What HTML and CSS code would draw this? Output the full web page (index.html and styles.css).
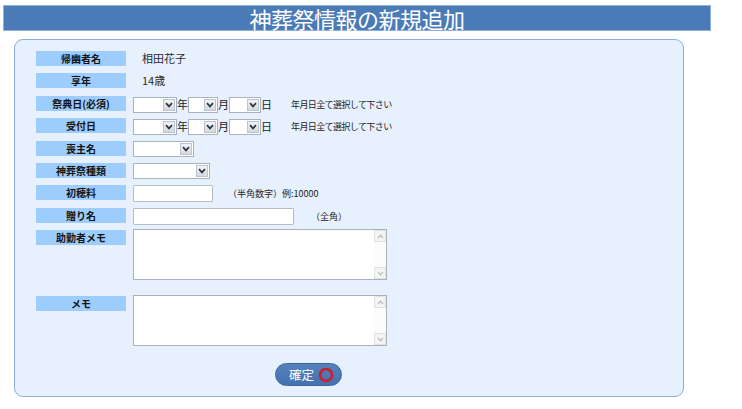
FILE: index.html
```html
<!DOCTYPE html>
<html lang="ja">
<head>
<meta charset="utf-8">
<title>神葬祭情報の新規追加</title>
<link rel="stylesheet" href="styles.css">
</head>
<body>
<h1 class="title">神葬祭情報の新規追加</h1>
<div class="panel">
  <div class="form">
    <div class="label">帰幽者名</div>
    <div class="value">相田花子</div>

    <div class="label">享年</div>
    <div class="value">14歳</div>

    <div class="label">祭典日(必須)</div>
    <div class="date">
      <span class="sel w-year"><span class="arr"><svg width="8" height="6" viewBox="0 0 8 6"><path d="M1 1.2 L4 4.4 L7 1.2" stroke="#2d3540" stroke-width="1.7" fill="none"/></svg></span></span><span class="unit">年</span>
      <span class="sel w-month"><span class="arr"><svg width="8" height="6" viewBox="0 0 8 6"><path d="M1 1.2 L4 4.4 L7 1.2" stroke="#2d3540" stroke-width="1.7" fill="none"/></svg></span></span><span class="unit">月</span>
      <span class="sel w-day"><span class="arr"><svg width="8" height="6" viewBox="0 0 8 6"><path d="M1 1.2 L4 4.4 L7 1.2" stroke="#2d3540" stroke-width="1.7" fill="none"/></svg></span></span><span class="unit">日</span>
      <span class="note date-note">年月日全て選択して下さい</span>
    </div>

    <div class="label">受付日</div>
    <div class="date">
      <span class="sel w-year"><span class="arr"><svg width="8" height="6" viewBox="0 0 8 6"><path d="M1 1.2 L4 4.4 L7 1.2" stroke="#2d3540" stroke-width="1.7" fill="none"/></svg></span></span><span class="unit">年</span>
      <span class="sel w-month"><span class="arr"><svg width="8" height="6" viewBox="0 0 8 6"><path d="M1 1.2 L4 4.4 L7 1.2" stroke="#2d3540" stroke-width="1.7" fill="none"/></svg></span></span><span class="unit">月</span>
      <span class="sel w-day"><span class="arr"><svg width="8" height="6" viewBox="0 0 8 6"><path d="M1 1.2 L4 4.4 L7 1.2" stroke="#2d3540" stroke-width="1.7" fill="none"/></svg></span></span><span class="unit">日</span>
      <span class="note date-note">年月日全て選択して下さい</span>
    </div>

    <div class="label">喪主名</div>
    <div class="field">
      <span class="sel w-mourner"><span class="arr"><svg width="8" height="6" viewBox="0 0 8 6"><path d="M1 1.2 L4 4.4 L7 1.2" stroke="#2d3540" stroke-width="1.7" fill="none"/></svg></span></span>
    </div>

    <div class="label">神葬祭種類</div>
    <div class="field">
      <span class="sel w-kind"><span class="arr"><svg width="8" height="6" viewBox="0 0 8 6"><path d="M1 1.2 L4 4.4 L7 1.2" stroke="#2d3540" stroke-width="1.7" fill="none"/></svg></span></span>
    </div>

    <div class="label">初穂料</div>
    <div class="field">
      <input class="txt w-fee" type="text">
      <span class="note fee-note">（半角数字）例:10000</span>
    </div>

    <div class="label">贈り名</div>
    <div class="field">
      <input class="txt w-name" type="text">
      <span class="note name-note">（全角）</span>
    </div>

    <div class="label">助勤者メモ</div>
    <div class="field">
      <div class="ta">
        <div class="sb">
          <span class="sbtn"><svg width="7" height="5" viewBox="0 0 7 5"><path d="M1 4 L3.5 1.2 L6 4" stroke="#b9bcc0" stroke-width="1.2" fill="none"/></svg></span>
          <span class="sbtn"><svg width="7" height="5" viewBox="0 0 7 5"><path d="M1 1 L3.5 3.8 L6 1" stroke="#b9bcc0" stroke-width="1.2" fill="none"/></svg></span>
        </div>
      </div>
    </div>

    <div class="label">メモ</div>
    <div class="field">
      <div class="ta">
        <div class="sb">
          <span class="sbtn"><svg width="7" height="5" viewBox="0 0 7 5"><path d="M1 4 L3.5 1.2 L6 4" stroke="#b9bcc0" stroke-width="1.2" fill="none"/></svg></span>
          <span class="sbtn"><svg width="7" height="5" viewBox="0 0 7 5"><path d="M1 1 L3.5 3.8 L6 1" stroke="#b9bcc0" stroke-width="1.2" fill="none"/></svg></span>
        </div>
      </div>
    </div>
  </div>
  <button class="btn" type="button">確定<svg class="maru" width="16" height="16" viewBox="0 0 16 16"><circle cx="8" cy="8" r="6" stroke="#cc1f2b" stroke-width="2.6" fill="none"/></svg></button>
</div>
</body>
</html>
```
FILE: styles.css
```css
html, body {
  margin: 0;
  padding: 0;
  background: #ffffff;
  font-family: "Noto Sans CJK JP", "DejaVu Sans", sans-serif;
  color: #222;
}

.title {
  box-sizing: border-box;
  margin: 5px 0 0 3px;
  width: 708px;
  height: 26px;
  background: #4a7bb7;
  border: 1px solid #8fb1db;
  color: #ffffff;
  font-size: 22px;
  font-weight: normal;
  line-height: 24px;
  text-align: center;
  letter-spacing: -0.5px;
}

.panel {
  box-sizing: border-box;
  margin: 8px 0 0 14px;
  width: 670px;
  height: 358px;
  background: #e7f0fd;
  border: 1px solid #8cadd7;
  border-radius: 9px;
  padding: 11px 0 0 21px;
}

.form {
  display: grid;
  grid-template-columns: 90px 1fr;
  grid-template-rows: repeat(8, 22.375px) 66px 67px;
  column-gap: 7px;
}

.label {
  align-self: start;
  height: 15px;
  background: #9dcdfd;
  font-size: 10px;
  font-weight: bold;
  line-height: 15px;
  text-align: center;
  color: #141414;
}

.value {
  align-self: start;
  padding-left: 9px;
  font-size: 11px;
  line-height: 15px;
  color: #2a2a2a;
}

.date, .field {
  align-self: start;
  display: flex;
  align-items: center;
  height: 17px;
}

.field {
  align-items: flex-start;
}

.sel {
  box-sizing: border-box;
  display: inline-flex;
  justify-content: flex-end;
  align-items: center;
  height: 16px;
  margin-top: 1px;
  background: #ffffff;
  border: 1px solid #a9b2bd;
  padding-right: 1px;
}

.arr {
  box-sizing: border-box;
  width: 12px;
  height: 12px;
  display: flex;
  align-items: center;
  justify-content: center;
  background: linear-gradient(#f1f3f7, #d3d9e2);
  border: 1px solid #bcc4cf;
}

.w-year { width: 44px; }
.w-month { width: 30px; }
.w-day { width: 32px; }
.w-mourner { width: 61px; margin-top: 0; }
.w-kind { width: 77px; margin-top: 0; }

.unit {
  font-size: 11px;
  line-height: 15px;
  width: 11px;
  color: #222;
}

.note {
  font-size: 9px;
  line-height: 15px;
  color: #1e1e1e;
  white-space: nowrap;
}

.date-note {
  margin-left: 19px;
  letter-spacing: -0.6px;
}

.txt {
  box-sizing: border-box;
  height: 17px;
  margin: 0;
  padding: 0;
  background: #ffffff;
  border: 1px solid #b6bcc4;
  border-radius: 1px;
  outline: none;
}

.w-fee { width: 80px; }
.w-name { width: 161px; }

.fee-note {
  margin-left: 15px;
  line-height: 17px;
}

.name-note {
  margin-left: 17px;
  line-height: 17px;
}

.ta {
  box-sizing: border-box;
  width: 254px;
  height: 51px;
  margin-top: -1px;
  background: #ffffff;
  border: 1px solid #a9b1bb;
  display: flex;
  justify-content: flex-end;
}

.sb {
  width: 12px;
  display: flex;
  flex-direction: column;
  justify-content: space-between;
  background: #fbfbf9;
}

.sbtn {
  box-sizing: border-box;
  height: 12px;
  display: flex;
  align-items: center;
  justify-content: center;
  background: #f4f4f1;
  border: 1px solid #e1e2e4;
}

.btn {
  box-sizing: border-box;
  display: flex;
  align-items: center;
  gap: 4px;
  margin: 0 0 0 239px;
  width: 67px;
  height: 23px;
  padding: 0 0 0 13px;
  background: linear-gradient(#5582bd, #4472ae);
  border: 1px solid #3b659f;
  border-radius: 12px;
  color: #ffffff;
  font-family: "Noto Sans CJK JP", sans-serif;
  font-size: 12.5px;
  line-height: 21px;
}

.maru {
  display: block;
}
```
